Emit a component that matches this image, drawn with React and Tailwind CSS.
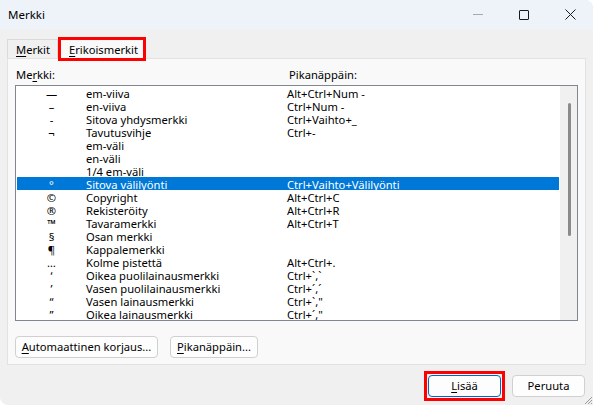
import React from "react";

const rows = [
  { sym: "—", name: "em-viiva", keys: "Alt+Ctrl+Num -" },
  { sym: "–", name: "en-viiva", keys: "Ctrl+Num -" },
  { sym: "-", name: "Sitova yhdysmerkki", keys: "Ctrl+Vaihto+_" },
  { sym: "¬", name: "Tavutusvihje", keys: "Ctrl+-" },
  { sym: "", name: "em-väli", keys: "" },
  { sym: "", name: "en-väli", keys: "" },
  { sym: "", name: "1/4 em-väli", keys: "" },
  { sym: "°", name: "Sitova välilyönti", keys: "Ctrl+Vaihto+Välilyönti", active: true },
  { sym: "©", name: "Copyright", keys: "Alt+Ctrl+C" },
  { sym: "®", name: "Rekisteröity", keys: "Alt+Ctrl+R" },
  { sym: "™", name: "Tavaramerkki", keys: "Alt+Ctrl+T" },
  { sym: "§", name: "Osan merkki", keys: "" },
  { sym: "¶", name: "Kappalemerkki", keys: "" },
  { sym: "…", name: "Kolme pistettä", keys: "Alt+Ctrl+." },
  { sym: "‘", name: "Oikea puolilainausmerkki", keys: "Ctrl+`,`" },
  { sym: "’", name: "Vasen puolilainausmerkki", keys: "Ctrl+´,´" },
  { sym: "“", name: "Vasen lainausmerkki", keys: "Ctrl+`,\"" },
  { sym: "”", name: "Oikea lainausmerkki", keys: "Ctrl+´,\"" },
];

function Btn({ children, className = "" }) {
  return (
    <button
      className={
        "h-[22px] rounded-[4px] border bg-[#fdfdfd] text-[11.2px] leading-none text-black flex items-center justify-center " +
        className
      }
    >
      {children}
    </button>
  );
}

export default function App() {
  return (
    <div
      className="w-[593px] h-[405px] bg-[#f0f0f0] relative overflow-hidden rounded-tr-[8px] rounded-bl-[8px] text-black"
      style={{ fontFamily: "'Noto Sans', 'Open Sans', sans-serif" }}
    >
      {/* title bar */}
      <div className="h-[29px] bg-[#eef2f9] flex items-center">
        <span className="pl-[8px] text-[11.5px] flex-1">Merkki</span>
        <div className="flex items-center h-full">
          <div className="w-[46px] h-full flex items-center justify-center">
            <div className="w-[10px] h-px bg-[#a8a8a8]" />
          </div>
          <div className="w-[46px] h-full flex items-center justify-center">
            <div className="w-[10px] h-[10px] border border-[#1a1a1a] rounded-[1px]" />
          </div>
          <div className="w-[46px] h-full flex items-center justify-center">
            <svg width="11" height="11" viewBox="0 0 11 11">
              <path d="M0.5 0.5 L10.5 10.5 M10.5 0.5 L0.5 10.5" stroke="#1a1a1a" strokeWidth="1" />
            </svg>
          </div>
        </div>
      </div>

      <div className="px-[7px] pt-[9px]">
        {/* tabs */}
        <div className="h-[20px] flex items-end text-[11.2px]">
          <div className="w-[51px] h-[19px] border border-b-0 border-[#dadada] bg-[#f0f0f0] pl-[8px] leading-[19px]">
            <u className="underline-offset-2">M</u>erkit
          </div>
          <div className="ml-[3px] w-[82px] h-[18px] bg-[#f9f9f9] leading-[19px] pl-[8px] outline-[3px] outline-solid outline-[#ff0000] relative z-10">
            <u className="underline-offset-2">E</u>rikoismerkit
          </div>
        </div>

        {/* panel */}
        <div className="h-[307px] border border-[#e2e2e2] bg-[#f9f9f9] px-[7px] pt-[8px]">
          <div className="h-[16px] text-[11.2px] leading-[16px] flex">
            <span className="pl-px w-[274px]">
              Me<u className="underline-offset-2">r</u>kki:
            </span>
            <span>Pikanäppäin:</span>
          </div>

          <div className="mt-[2px] h-[236px] border border-[#82868e] bg-white flex">
            <div className="flex-1 px-px">
              {rows.map((r, i) => (
                <div
                  key={i}
                  className={
                    "h-[13px] pt-[2px] flex items-start text-[11.2px] leading-[12px] whitespace-nowrap " +
                    (r.active ? "bg-[#0078d7] text-white" : "")
                  }
                >
                  <span className="w-[69px] text-center">{r.sym}</span>
                  <span className="w-[201px]">{r.name}</span>
                  <span>{r.keys}</span>
                </div>
              ))}
            </div>
            <div className="w-[17px] bg-[#f0f0f0] flex justify-center pt-[17px] pl-px">
              <div className="w-[3px] h-[133px] bg-[#8a8a8a] rounded-full" />
            </div>
          </div>

          <div className="mt-[15px] flex gap-[12px]">
            <Btn className="w-[143px] border-[#d0d0d0]">
              <span>
                <u className="underline-offset-2">A</u>utomaattinen korjaus...
              </span>
            </Btn>
            <Btn className="w-[88px] border-[#d0d0d0]">
              <span>
                <u className="underline-offset-2">P</u>ikanäppäin...
              </span>
            </Btn>
          </div>
        </div>

        {/* dialog buttons */}
        <div className="mt-[10px] flex justify-end gap-[11px] pr-px">
          <div className="outline-[3px] outline-solid outline-[#ff0000] outline-offset-[1px]">
            <Btn className="w-[73px] border-[#0067c0]">
              <span>
                <u className="underline-offset-2">L</u>isää
              </span>
            </Btn>
          </div>
          <Btn className="w-[73px] border-[#d0d0d0]">Peruuta</Btn>
        </div>
      </div>

      {/* size grip */}
      <svg className="absolute right-0 bottom-0" width="10" height="10" viewBox="0 0 10 10">
        <path d="M9 2 L2 9 M9 5 L5 9 M9 8 L8 9" stroke="#9a9a9a" strokeWidth="1" />
      </svg>
    </div>
  );
}
